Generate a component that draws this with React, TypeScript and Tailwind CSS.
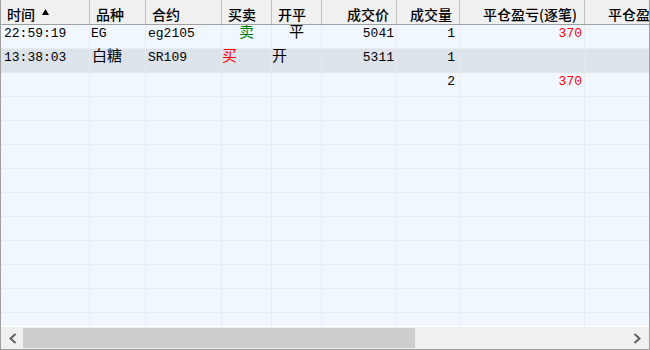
type Col = { label: string; w: string; align: 'left' | 'right' };

const COLS: Col[] = [
  { label: '时间', w: 'w-[89px]', align: 'left' },
  { label: '品种', w: 'w-[56px]', align: 'left' },
  { label: '合约', w: 'w-[76px]', align: 'left' },
  { label: '买卖', w: 'w-[50px]', align: 'left' },
  { label: '开平', w: 'w-[50px]', align: 'left' },
  { label: '成交价', w: 'w-[75px]', align: 'right' },
  { label: '成交量', w: 'w-[63px]', align: 'right' },
  { label: '平仓盈亏(逐笔)', w: 'w-[125px]', align: 'right' },
  { label: '平仓盈亏(逐日)', w: 'w-[125px]', align: 'right' },
];

// pos: alignment/padding, font: size, color: text colour
type Cell = { t: string; pos?: string; cjk?: boolean; color?: string };

const RED = 'text-[#ff0000]';
const GREEN = 'text-[#008000]';

const ROWS: { cells: Cell[]; selected?: boolean }[] = [
  {
    cells: [
      { t: '22:59:19', pos: 'pl-[3px]' },
      { t: 'EG', pos: 'pl-[1px]' },
      { t: 'eg2105', pos: 'pl-[2px]' },
      { t: '卖', pos: 'justify-center', cjk: true, color: GREEN },
      { t: '平', pos: 'justify-center', cjk: true },
      { t: '5041', pos: 'justify-end pr-[2px]' },
      { t: '1', pos: 'justify-end pr-[4px]' },
      { t: '370', pos: 'justify-end pr-[2px]', color: RED },
      { t: '' },
    ],
  },
  {
    selected: true,
    cells: [
      { t: '13:38:03', pos: 'pl-[3px]' },
      { t: '白糖', pos: 'pl-[2px]', cjk: true },
      { t: 'SR109', pos: 'pl-[2px]' },
      { t: '买', cjk: true, color: RED },
      { t: '开', cjk: true },
      { t: '5311', pos: 'justify-end pr-[2px]' },
      { t: '1', pos: 'justify-end pr-[4px]' },
      { t: '' },
      { t: '' },
    ],
  },
  {
    cells: [
      { t: '' }, { t: '' }, { t: '' }, { t: '' }, { t: '' }, { t: '' },
      { t: '2', pos: 'justify-end pr-[4px]' },
      { t: '370', pos: 'justify-end pr-[2px]', color: RED },
      { t: '' },
    ],
  },
];

const EMPTY = Array.from({ length: 10 }, () => ({ cells: COLS.map(() => ({ t: '' }) as Cell), selected: false }));

function Chevron({ dir }: { dir: 'left' | 'right' }) {
  return (
    <svg width="8" height="11" viewBox="0 0 8 11">
      <polyline
        points={dir === 'left' ? '6.5,1 1.5,5.5 6.5,10' : '1.5,1 6.5,5.5 1.5,10'}
        fill="none"
        stroke="#606060"
        strokeWidth="2"
      />
    </svg>
  );
}

export default function App() {
  const rows = [...ROWS, ...EMPTY];
  return (
    <div className="w-[650px] h-[350px] bg-white font-['Liberation_Mono','Noto_Sans_CJK_SC',monospace]">
      <div className="w-[650px] h-[350px] border-x border-b border-[#a0a0a0] bg-[#f0f7ff] flex flex-col overflow-hidden">
        <div className="h-[25px] shrink-0 flex border-b border-[#a0a0a0] bg-[#f0f0f0] font-['Noto_Sans_CJK_SC',sans-serif] text-[14px] font-medium text-black overflow-hidden">
          {COLS.map((c, i) => (
            <div
              key={c.label}
              className={`${c.w} shrink-0 h-full flex items-center pt-[3px] border-r border-[#c0c0c0] whitespace-nowrap overflow-hidden ${
                c.align === 'right' ? 'justify-end pr-[7px]' : 'pl-[6px]'
              }`}
            >
              <span className="leading-none">{c.label}</span>
              {i === 0 && (
                <svg width="7" height="6" viewBox="0 0 7 6" className="ml-[7px] mb-[3px]">
                  <polygon points="3.5,0 7,6 0,6" fill="#000" />
                </svg>
              )}
            </div>
          ))}
        </div>
        <div className="flex-1 overflow-hidden">
          {rows.map((r, ri) => (
            <div
              key={ri}
              className={`h-[24px] flex border-b ${r.selected ? 'bg-[#dde3ea] border-[#e4e8ee]' : 'border-[#e8ecf0]'}`}
            >
              {r.cells.map((c, ci) => (
                <div
                  key={ci}
                  className={`${COLS[ci].w} shrink-0 h-full flex items-center pb-[5px] border-r whitespace-nowrap ${
                    r.selected ? 'border-[#e4e8ee]' : 'border-[#e8ecf0]'
                  } ${c.pos ?? ''} ${c.cjk ? 'text-[15px]' : 'text-[13px]'} ${c.color ?? 'text-black'}`}
                >
                  {c.t}
                </div>
              ))}
            </div>
          ))}
        </div>
        <div className="h-[23px] shrink-0 border-t border-white bg-[#f0f0f0] flex items-stretch">
          <div className="w-[22px] flex items-center justify-center pl-[1px]">
            <Chevron dir="left" />
          </div>
          <div className="flex-1 py-[1px]">
            <div className="h-full w-[392px] bg-[#cdcdcd]" />
          </div>
          <div className="w-[22px] flex items-center justify-center pr-[2px]">
            <Chevron dir="right" />
          </div>
        </div>
      </div>
    </div>
  );
}
